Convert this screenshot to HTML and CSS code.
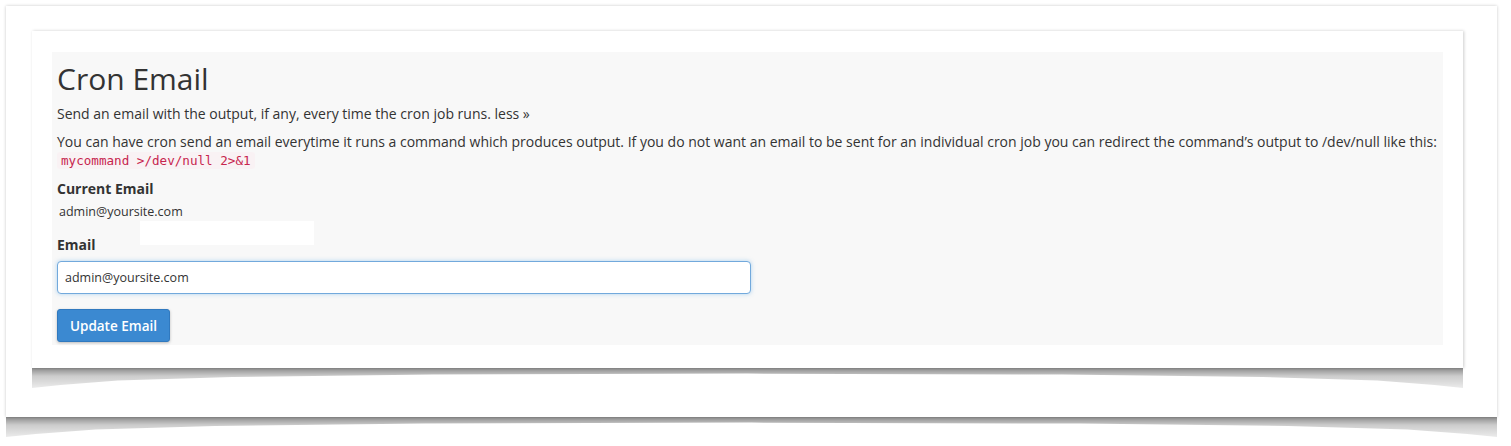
FILE: index.html
```html
<!DOCTYPE html>
<html lang="en">
<head>
<meta charset="utf-8">
<title>Cron Email</title>
<link rel="stylesheet" href="styles.css">
</head>
<body>
<div class="page">
  <div class="frame">
    <div class="card">
      <div class="panel">
        <h1 class="title">Cron Email</h1>
        <p class="lead">Send an email with the output, if any, every time the cron job runs. <a class="less" href="#">less »</a></p>
        <p class="desc">You can have cron send an email everytime it runs a command which produces output. If you do not want an email to be sent for an individual cron job you can redirect the command’s output to /dev/null like this:<br><code class="code">mycommand &gt;/dev/null 2&gt;&amp;1</code></p>
        <div class="label">Current Email</div>
        <div class="current">admin@yoursite.com</div>
        <div class="blank"></div>
        <label class="label" for="email">Email</label>
        <input class="input" id="email" type="text" value="admin@yoursite.com">
        <button class="btn" type="button">Update Email</button>
      </div>
    </div>
  </div>
</div>
</body>
</html>
```

FILE: styles.css
```css
html, body {
  margin: 0;
  padding: 0;
  background: #ffffff;
}

body {
  font-family: "Open Sans", "Liberation Sans", sans-serif;
  color: #333333;
}

.page {
  padding: 6px 0 29px 6px;
}

.frame {
  position: relative;
  width: 1491px;
  height: 411px;
  box-sizing: border-box;
  padding: 25px 0 0 26px;
  background: #ffffff;
  box-shadow: 0 0 3px rgba(0, 0, 0, 0.22);
}

.frame::after,
.card::after {
  content: "";
  position: absolute;
  top: 100%;
  left: 0;
  right: 0;
  height: 20px;
  background: linear-gradient(to bottom, rgba(0, 0, 0, 0.45), rgba(0, 0, 0, 0.2) 40%, rgba(0, 0, 0, 0.08));
  clip-path: polygon(0 0, 100% 0, 100% 100%, 98% 85%, 94% 62%, 86% 45%, 72% 33%, 50% 28%, 28% 33%, 14% 45%, 6% 62%, 2% 85%, 0 100%);
}

.card {
  position: relative;
  width: 1431px;
  height: 337px;
  box-sizing: border-box;
  padding: 21px 0 0 20px;
  background: #ffffff;
  box-shadow: 1px 0 3px rgba(0, 0, 0, 0.2);
}

.panel {
  width: 1391px;
  height: 293px;
  box-sizing: border-box;
  padding: 8px 5px 0 5px;
  background: #f8f8f8;
}

.title {
  margin: 0;
  font-size: 30px;
  font-weight: 400;
  line-height: 38px;
  color: #333333;
}

.lead {
  margin: 6px 0 0 0;
  font-size: 14px;
  line-height: 20px;
}

.less {
  color: #333333;
  text-decoration: none;
}

.desc {
  margin: 9px 0 0 0;
  font-size: 14px;
  line-height: 18px;
}

.code {
  display: inline-block;
  padding: 0 4px;
  font-family: "DejaVu Sans Mono", "Liberation Mono", monospace;
  font-size: 12.6px;
  line-height: 17px;
  color: #c7254e;
  background: #f9f2f4;
  border-radius: 3px;
}

.label {
  display: block;
  margin: 10px 0 0 0;
  font-size: 14px;
  font-weight: 700;
  line-height: 20px;
}

.current {
  margin: 4px 0 0 2px;
  font-size: 12.5px;
  line-height: 18px;
}

.blank {
  width: 174px;
  height: 24px;
  margin: 0 0 -20px 83px;
  background: #ffffff;
}

.input {
  display: block;
  width: 694px;
  height: 33px;
  box-sizing: border-box;
  margin: 6px 0 0 0;
  padding: 0 7px;
  font-family: "Open Sans", "Liberation Sans", sans-serif;
  font-size: 12.5px;
  color: #333333;
  background: #ffffff;
  border: 1px solid #72a9dc;
  border-radius: 4px;
  box-shadow: 0 0 4px rgba(102, 175, 233, 0.5);
  outline: none;
}

.btn {
  display: block;
  width: 113px;
  height: 33px;
  margin: 15px 0 0 0;
  padding: 0;
  font-family: "Open Sans", "Liberation Sans", sans-serif;
  font-size: 13.5px;
  font-weight: 600;
  color: #ffffff;
  background: #3b89d1;
  border: 1px solid #3079bf;
  border-radius: 3px;
  box-shadow: 0 1px 3px rgba(0, 0, 0, 0.25);
}
```
